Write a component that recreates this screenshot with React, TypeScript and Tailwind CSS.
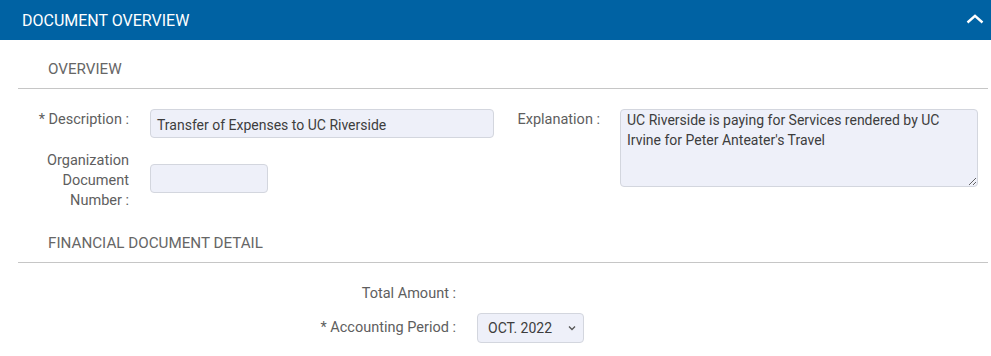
import React from "react";

function Heading({ children, top }: { children: React.ReactNode; top: string }) {
  return (
    <div className={`ml-[18px] mr-[3px] border-b border-[#c6c6c6] pl-[30px] pb-[9px] text-[15.2px] leading-5 text-[#666666] ${top}`}>
      {children}
    </div>
  );
}

export default function App() {
  return (
    <div className="w-[991px] h-[356px] bg-white font-['Roboto','Liberation_Sans',sans-serif] text-[14px]">
      <div className="h-10 bg-[#0062a3] flex items-center justify-between pl-[22px] pr-[7px]">
        <span className="text-white text-[16px] leading-5 pt-px">DOCUMENT OVERVIEW</span>
        <svg width="18" height="10" viewBox="0 0 18 10" className="-mt-[3px]">
          <path d="M1.5 8.5 L9 1.8 L16.5 8.5" fill="none" stroke="white" strokeWidth="2.4" />
        </svg>
      </div>

      <Heading top="pt-[19px]">OVERVIEW</Heading>

      <div className="flex mt-5">
        <div className="flex flex-col">
          <div className="flex items-start">
            <label className="w-[129px] text-right text-[14.5px] leading-5 text-[#5e5e5e] pt-px">* Description :</label>
            <div className="ml-[21px] w-[344px] h-[29px] rounded-[4px] border border-[#d3d6de] bg-[#eef0f9] pl-[6px] flex items-center text-[#3d3d3d] pt-[3px]">
              Transfer of Expenses to UC Riverside
            </div>
          </div>
          <div className="flex items-start mt-[11px]">
            <label className="w-[129px] text-right text-[14.5px] leading-5 text-[#5e5e5e] pt-[2px]">
              Organization
              <br />
              Document
              <br />
              Number :
            </label>
            <div className="ml-[21px] mt-[15px] w-[118px] h-[29px] rounded-[4px] border border-[#d3d6de] bg-[#eef0f9]" />
          </div>
        </div>
        <div className="flex items-start">
          <label className="w-[106px] text-right text-[14.5px] leading-5 text-[#5e5e5e] pt-px">Explanation :</label>
          <textarea
            readOnly
            className="ml-5 w-[358px] h-[78px] rounded-[4px] border border-[#d3d6de] bg-[#eef0f9] pl-[6px] pt-0 leading-5 text-[#3d3d3d] outline-none resize"
            value={"UC Riverside is paying for Services rendered by UC\nIrvine for Peter Anteater's Travel"}
          />
        </div>
      </div>

      <Heading top="pt-[22px]">FINANCIAL DOCUMENT DETAIL</Heading>

      <div className="flex flex-col mt-5">
        <div className="flex items-center h-5">
          <label className="w-[456px] text-right text-[14.5px] leading-5 text-[#5e5e5e] pt-px">Total Amount :</label>
        </div>
        <div className="flex items-center mt-[10px]">
          <label className="w-[456px] text-right text-[14.5px] leading-5 text-[#5e5e5e]">* Accounting Period :</label>
          <div className="ml-[21px] w-[107px] h-[30px] rounded-[4px] border border-[#d3d6de] bg-[#eef0f9] pl-[10px] pr-[7px] flex items-center justify-between text-[#3d3d3d]">
            <span className="pt-px">OCT. 2022</span>
            <svg width="8" height="6" viewBox="0 0 8 6">
              <path d="M1 1.5 L4 4.5 L7 1.5" fill="none" stroke="#555" strokeWidth="1.3" />
            </svg>
          </div>
        </div>
      </div>
    </div>
  );
}
